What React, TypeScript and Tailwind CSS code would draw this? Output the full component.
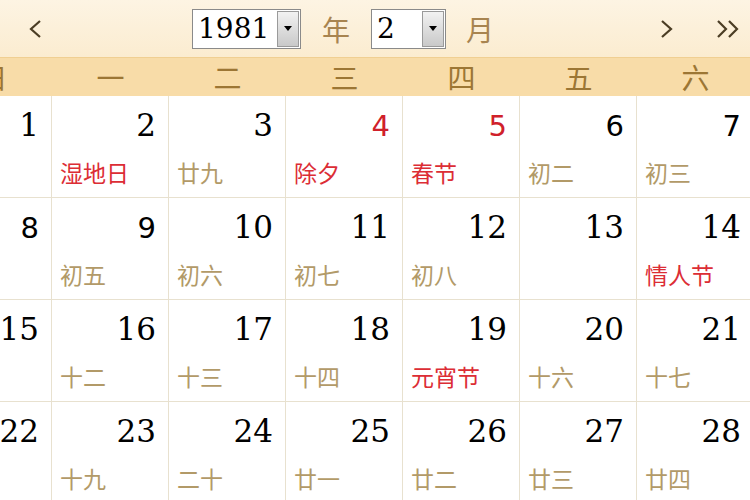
import React from "react"

type Day = {
  n: number
  lunar?: string
  redNum?: boolean
  redText?: boolean
}

const weeks: Day[][] = [
  [
    { n: 1 },
    { n: 2, lunar: "湿地日", redText: true },
    { n: 3, lunar: "廿九" },
    { n: 4, lunar: "除夕", redNum: true, redText: true },
    { n: 5, lunar: "春节", redNum: true, redText: true },
    { n: 6, lunar: "初二" },
    { n: 7, lunar: "初三" },
  ],
  [
    { n: 8 },
    { n: 9, lunar: "初五" },
    { n: 10, lunar: "初六" },
    { n: 11, lunar: "初七" },
    { n: 12, lunar: "初八" },
    { n: 13 },
    { n: 14, lunar: "情人节", redText: true },
  ],
  [
    { n: 15 },
    { n: 16, lunar: "十二" },
    { n: 17, lunar: "十三" },
    { n: 18, lunar: "十四" },
    { n: 19, lunar: "元宵节", redText: true },
    { n: 20, lunar: "十六" },
    { n: 21, lunar: "十七" },
  ],
  [
    { n: 22 },
    { n: 23, lunar: "十九" },
    { n: 24, lunar: "二十" },
    { n: 25, lunar: "廿一" },
    { n: 26, lunar: "廿二" },
    { n: 27, lunar: "廿三" },
    { n: 28, lunar: "廿四" },
  ],
]

const weekdays = ["日", "一", "二", "三", "四", "五", "六"]

const cjk = "font-['Noto_Sans_CJK_SC',sans-serif]"

function Chevron({ double, left }: { double?: boolean; left?: boolean }) {
  return (
    <svg width={double ? 24 : 14} height="20" viewBox={double ? "0 0 24 20" : "0 0 14 20"} fill="none">
      {left ? (
        <polyline points="12,2 3,10 12,18" stroke="#4b3d24" strokeWidth="2.2" />
      ) : double ? (
        <>
          <polyline points="2,2 10,10 2,18" stroke="#4b3d24" strokeWidth="2.2" />
          <polyline points="13,2 21,10 13,18" stroke="#4b3d24" strokeWidth="2.2" />
        </>
      ) : (
        <polyline points="2,2 11,10 2,18" stroke="#4b3d24" strokeWidth="2.2" />
      )}
    </svg>
  )
}

function Select({ value, width }: { value: string; width: string }) {
  return (
    <div className={`flex h-[40px] ${width} items-stretch border border-[#8a8a8a] bg-white`}>
      <div className="flex flex-1 items-center pl-[5px] font-['DejaVu_Serif',serif] text-[28px] leading-none text-black">
        {value}
      </div>
      <div className="m-[1px] flex w-[22px] items-center justify-center border border-[#9a9a9a] bg-gradient-to-b from-[#f2f2f2] to-[#c9c9c9]">
        <div className="h-0 w-0 border-x-[4px] border-t-[5px] border-x-transparent border-t-black" />
      </div>
    </div>
  )
}

function Cell({ day }: { day: Day }) {
  const sansDigit = day.n >= 4 && day.n <= 9
  return (
    <div className="flex h-[102px] w-[117px] shrink-0 flex-col border-r border-b border-[#e8e1cf] bg-white">
      <div
        className={`flex h-[52px] items-end justify-end pr-[12px] leading-none ${
          sansDigit
            ? "font-['DejaVu_Sans',sans-serif] text-[29px] pb-[7px]"
            : "font-['DejaVu_Serif',serif] text-[31px] pb-[7px]"
        } ${day.redNum ? "text-[#d0202a]" : "text-black"}`}
      >
        {day.n}
      </div>
      <div
        className={`mt-[13px] pl-[8px] text-[23px] leading-none ${cjk} ${
          day.redText ? "text-[#dc2d35]" : "text-[#b29a68]"
        }`}
      >
        {day.lunar}
      </div>
    </div>
  )
}

export default function App() {
  return (
    <div className="h-[500px] w-[750px] overflow-hidden bg-white">
      {/* top bar */}
      <div className="flex h-[57px] items-center bg-gradient-to-b from-[#fdf4e3] to-[#fbecd0]">
        <div className="ml-[28px]">
          <Chevron left />
        </div>
        <div className="ml-[150px]">
          <Select value="1981" width="w-[109px]" />
        </div>
        <span className={`ml-[21px] text-[28px] text-[#a88450] ${cjk}`}>年</span>
        <div className="ml-[21px]">
          <Select value="2" width="w-[75px]" />
        </div>
        <span className={`ml-[20px] text-[28px] text-[#a88450] ${cjk}`}>月</span>
        <div className="ml-auto mr-[10px] flex items-center gap-[42px]">
          <Chevron />
          <Chevron double />
        </div>
      </div>

      {/* weekday row */}
      <div className="ml-[-65px] flex h-[39px] w-[819px] border-t border-[#f0cf92] bg-[#f8dca8]">
        {weekdays.map((w) => (
          <div
            key={w}
            className={`flex w-[117px] shrink-0 items-center justify-center text-[28px] leading-none text-[#9c7634] ${cjk}`}
          >
            {w}
          </div>
        ))}
      </div>

      {/* days */}
      <div className="ml-[-65px] w-[819px]">
        {weeks.map((week, i) => (
          <div key={i} className="flex">
            {week.map((d) => (
              <Cell key={d.n} day={d} />
            ))}
          </div>
        ))}
      </div>
    </div>
  )
}
